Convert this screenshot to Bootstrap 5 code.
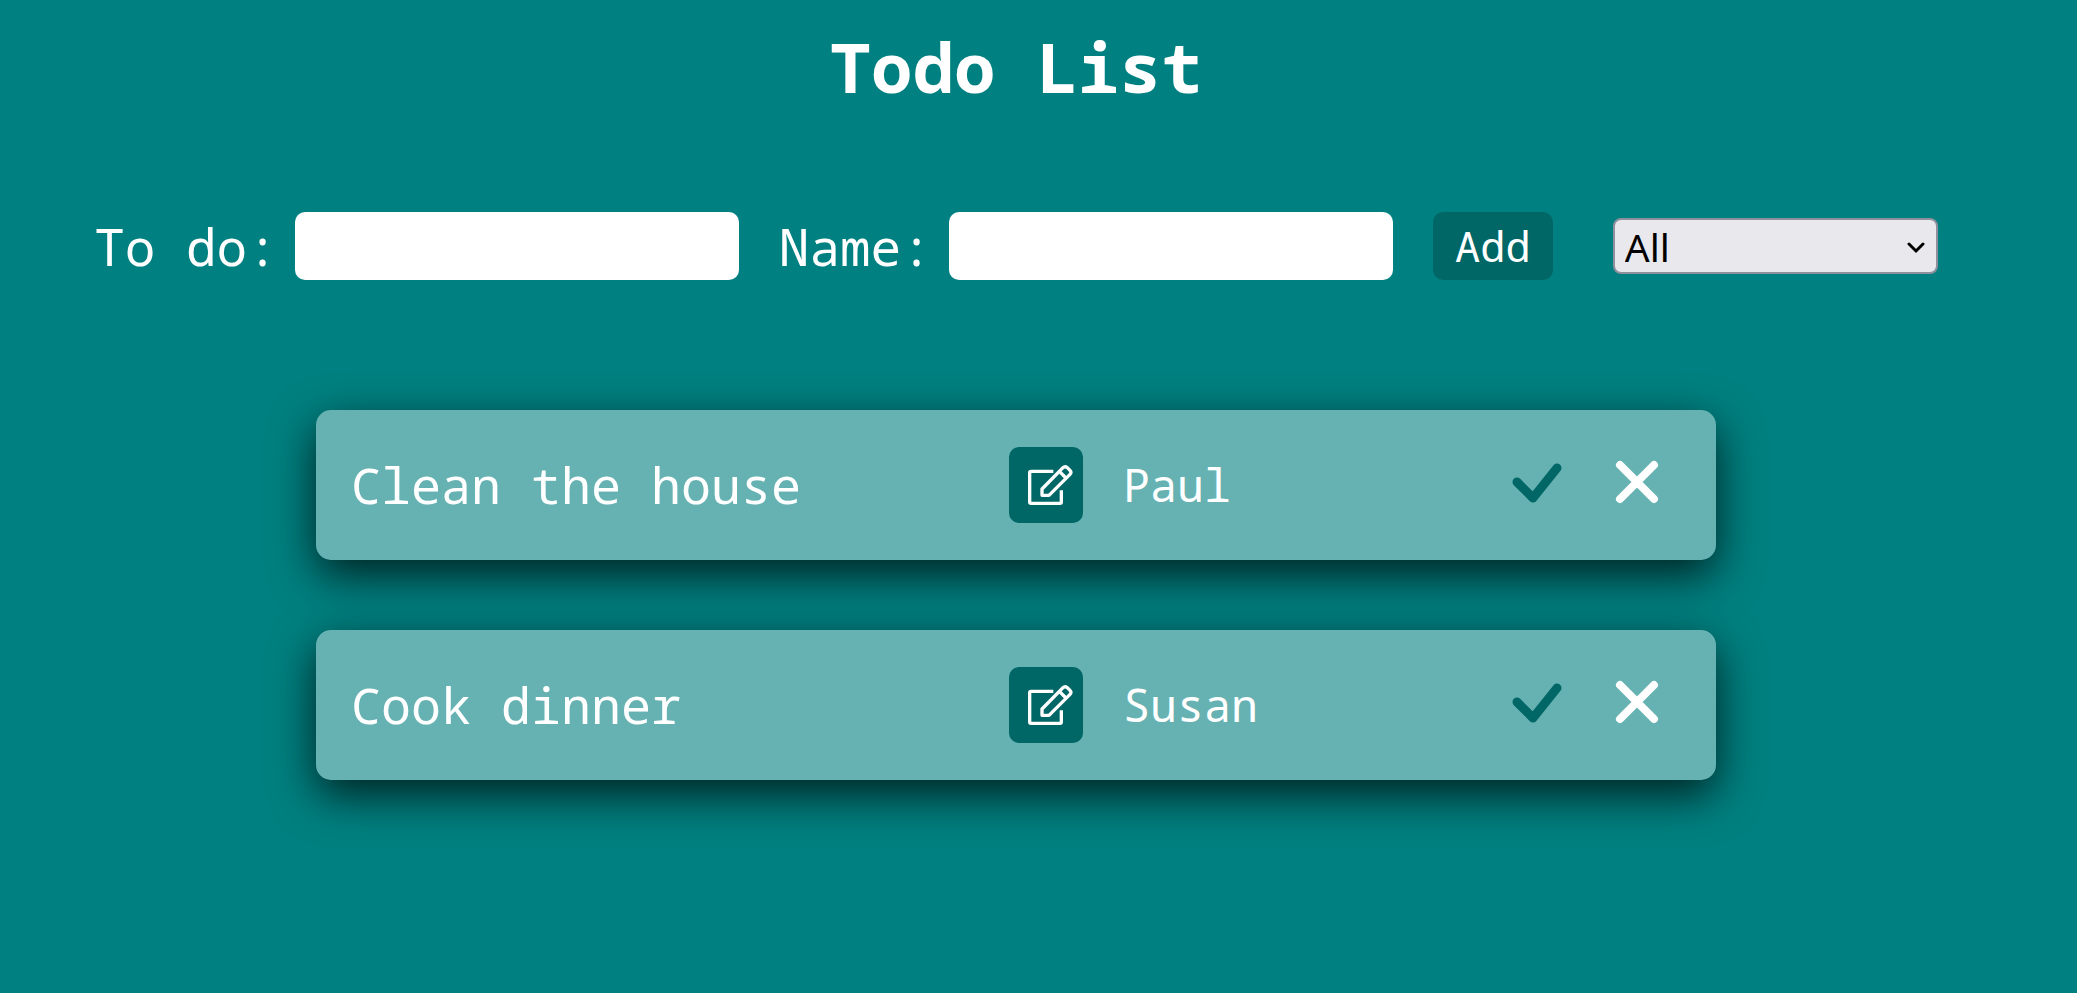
<!DOCTYPE html>
<html lang="en">
<head>
<meta charset="utf-8">
<meta name="viewport" content="width=device-width, initial-scale=1">
<title>Todo List</title>
<link href="https://cdn.jsdelivr.net/npm/bootstrap@5.3.0/dist/css/bootstrap.min.css" rel="stylesheet">
<style>
  body { background: #008080; color: #fff; font-family: "Noto Sans Mono", "DejaVu Sans Mono", monospace; }
  .page { padding: 22px 45px 40px 0; }
  .page-title { font-size: 69px; line-height: 88px; margin-bottom: 102px; }
  .todo-form { column-gap: 40px; row-gap: 24px; margin-bottom: 130px; }
  .field-group { gap: 17px; }
  .field-group label { font-size: 51px; line-height: 68px; }
  .field-group .form-control { width: 444px; height: 68px; font-size: 36px; border: 0; border-radius: 10px; }
  .btn-teal { --bs-btn-color: #fff; --bs-btn-bg: #006666; --bs-btn-hover-color: #fff; --bs-btn-hover-bg: #005555; border: 0; border-radius: 10px; }
  .btn-add { width: 120px; height: 68px; font-size: 42px; line-height: 68px; padding: 0; }
  .filter-select { width: 325px; height: 56px; margin-left: 20px; padding: 2px 10px 0; font-family: "Noto Sans", sans-serif; font-size: 39px; line-height: 50px; color: #000;
    background: #e9e9ed url("data:image/svg+xml,%3Csvg xmlns='http://www.w3.org/2000/svg' viewBox='0 0 18 12'%3E%3Cpath d='M2 2l7 7 7-7' fill='none' stroke='%23000' stroke-width='3' stroke-linecap='round'/%3E%3C/svg%3E") no-repeat right 11px top 22px / 18px 12px;
    border: 2px solid #8f8f9d; border-radius: 8px; }
  .todo-list { max-width: 1400px; gap: 70px; }
  .todo-item { min-height: 150px; padding: 0 54px 0 35px; background: #66b2b2; border-radius: 15px; box-shadow: 0 15px 45px rgba(0, 0, 0, .75); }
  .task-text { width: 658px; font-size: 50px; line-height: 60px; }
  .btn-edit { width: 74px; height: 76px; padding: 0 0 0 8px; margin-right: 40px; }
  .person { font-size: 45px; line-height: 60px; }
  .item-actions { gap: 50px; }
  .item-actions .btn { border: 0; padding: 0; width: 50px; height: 50px; margin-bottom: 7px; }
</style>
</head>
<body>
<svg class="d-none" xmlns="http://www.w3.org/2000/svg">
  <symbol id="icon-edit" viewBox="0 0 138 126">
    <g fill="none" stroke="#fff" stroke-width="10" stroke-linejoin="round">
      <path d="M79 22H12Q8 22 8 26V114Q8 118 12 118H99Q103 118 103 114V79"/>
      <path d="M45 94V75L108 11Q114 5 121 11L129 19Q135 25 129 31L66 94Z"/>
      <path d="M97 22L117 42"/>
    </g>
  </symbol>
  <symbol id="icon-check" viewBox="0 0 50 50">
    <path d="M5 25L21 41L45 11" fill="none" stroke="#006666" stroke-width="9" stroke-linecap="round" stroke-linejoin="round"/>
  </symbol>
  <symbol id="icon-close" viewBox="0 0 50 50">
    <path d="M8 8L42 42M42 8L8 42" fill="none" stroke="#fff" stroke-width="8" stroke-linecap="round"/>
  </symbol>
</svg>
<main class="page min-vh-100">
  <h1 class="page-title text-center fw-bold">Todo List</h1>
  <form class="todo-form d-flex flex-wrap justify-content-center align-items-center">
    <div class="field-group d-flex align-items-center">
      <label for="todo">To do:</label>
      <input id="todo" type="text" class="form-control">
    </div>
    <div class="field-group d-flex align-items-center">
      <label for="name">Name:</label>
      <input id="name" type="text" class="form-control">
    </div>
    <button type="button" class="btn btn-teal btn-add">Add</button>
    <select class="form-select filter-select" aria-label="Filter"><option>All</option></select>
  </form>
  <ul class="todo-list list-unstyled d-flex flex-column mx-auto mb-0">
    <li class="todo-item d-flex align-items-center">
      <span class="task-text">Clean the house</span>
      <button type="button" class="btn btn-teal btn-edit d-flex align-items-center justify-content-center" aria-label="Edit"><svg width="46" height="42"><use href="#icon-edit"/></svg></button>
      <span class="person">Paul</span>
      <span class="item-actions d-flex ms-auto">
        <button type="button" class="btn d-flex" aria-label="Done"><svg width="50" height="50"><use href="#icon-check"/></svg></button>
        <button type="button" class="btn d-flex" aria-label="Delete"><svg width="50" height="50"><use href="#icon-close"/></svg></button>
      </span>
    </li>
    <li class="todo-item d-flex align-items-center">
      <span class="task-text">Cook dinner</span>
      <button type="button" class="btn btn-teal btn-edit d-flex align-items-center justify-content-center" aria-label="Edit"><svg width="46" height="42"><use href="#icon-edit"/></svg></button>
      <span class="person">Susan</span>
      <span class="item-actions d-flex ms-auto">
        <button type="button" class="btn d-flex" aria-label="Done"><svg width="50" height="50"><use href="#icon-check"/></svg></button>
        <button type="button" class="btn d-flex" aria-label="Delete"><svg width="50" height="50"><use href="#icon-close"/></svg></button>
      </span>
    </li>
  </ul>
</main>
<script src="https://cdn.jsdelivr.net/npm/bootstrap@5.3.0/dist/js/bootstrap.bundle.min.js"></script>
</body>
</html>
